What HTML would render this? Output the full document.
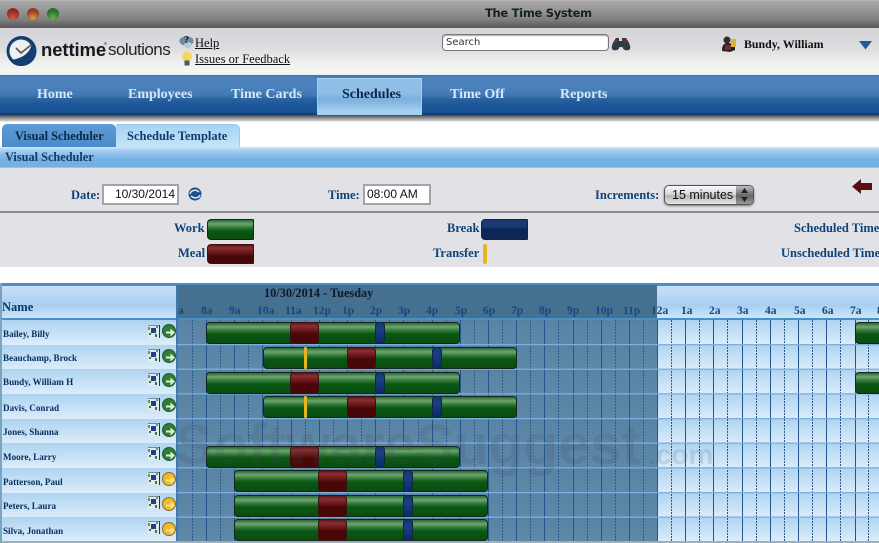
<!DOCTYPE html>
<html><head><meta charset="utf-8"><title>The Time System</title>
<style>
*{box-sizing:border-box}
html,body{margin:0;padding:0}
body{width:879px;height:543px;position:relative;overflow:hidden;background:#fff;font-family:"Liberation Serif",serif}
div,span,a,svg{position:absolute;white-space:nowrap}
.nav{top:86px;font:bold 14px/18px "Liberation Serif",serif;color:#d4e8f8}
.lab{font:bold 12.5px/16px "Liberation Serif",serif;color:#0f4377}
.input{background:#fff;border:2px solid #a4a4a6;font:12px/17px "Liberation Sans",sans-serif;color:#111}
.row{left:0;width:879px;height:25px;background:linear-gradient(#aed3f0,#dcedfb)}
.name{left:3px;font:bold 9.100px/12px "Liberation Serif",serif;color:#082f60}
.hr{top:304px;font:bold 11.5px/14px "Liberation Serif",serif;color:#14487f}
.w,.m,.b{height:22px;border:1px solid #13261c;border-radius:4px}
.w{background:linear-gradient(#2a6a32 0,#6fa573 4px,#3a8042 7px,#0a5713 11px,#0a4d10 100%)}
.m{background:linear-gradient(#5d1518 0,#8b2e30 3px,#6e1c1f 7px,#4a0707 11px,#470707 100%);border-color:#3a1010}
.b{background:linear-gradient(#17386f,#1a3f86 6px,#0c2a66);border-color:#10283f}
.t{height:22px;width:3px;background:#e3b71e;border-radius:1px}
.ic{left:148px;width:12px;height:13px}
.go{left:162px;width:14px;height:14px;border-radius:50%;background:#2f7d36;border:1px solid #1f5a28}
.go.y{background:#ecb92f;border-color:#8e6b23}
.go svg{left:1.500px;top:1.500px}
</style></head><body>

<svg width="0" height="0" style="left:0;top:0"><defs>
<g id="mp"><rect width="12" height="13" fill="#dfe9ee"/><rect x="11" width="1" height="13" fill="#28343e"/><rect width="11" height="1" fill="#7b8b97"/><rect x="0" y="2" width="2" height="3" fill="#5a9a60"/><rect x="3" y="3" width="5" height="5" fill="#1c3f8c"/><rect x="1" y="8" width="2" height="2" fill="#2f7d3c"/><rect x="7" y="9" width="2" height="3" fill="#2f7d3c"/><rect x="8" y="1" width="2" height="2" fill="#6c8a98"/></g>
<path id="ar" d="M1 4.500 H5.500 V1.500 L10 5.500 L5.500 9.500 V6.500 H1Z"/>
</defs></svg>

<!-- title bar -->
<div style="left:0;top:0;width:879px;height:28px;background:linear-gradient(#c9c9c9 0,#a8a8a8 1px,#969696 10px,#7e7e7e 20px,#5b5b5b 27px)"></div>
<div style="left:7px;top:8px;width:12px;height:12px;border-radius:50%;background:radial-gradient(circle at 50% 85%,#c9603c,#8e2a22 65%)"></div>
<div style="left:27px;top:8px;width:12px;height:12px;border-radius:50%;background:radial-gradient(circle at 50% 85%,#d8a23e,#9b3528 65%)"></div>
<div style="left:47px;top:8px;width:12px;height:12px;border-radius:50%;background:radial-gradient(circle at 50% 85%,#6cb14a,#2a6e2c 65%)"></div>
<div style="left:485px;top:6px;font:bold 11.500px/15px 'DejaVu Sans',sans-serif;color:#152225;letter-spacing:-.3px">The Time System</div>

<!-- header -->
<div style="left:0;top:28px;width:879px;height:47px;background:linear-gradient(#d4d4d8 0,#dddde0 20px,#f0f0ee 35px,#f6f6f3 44px,#e2f2f6 47px)"></div>
<svg style="left:6px;top:35px" width="31" height="32" viewBox="0 0 31 32">
<circle cx="15.500" cy="16" r="15" fill="#143f73"/>
<circle cx="15" cy="16" r="11.500" fill="#eef0f2"/>
<path d="M4 25 C14 24 23 20 26 9 L30 16 C30 24 22 31 15 31 C10 31 6 29 4 25Z" fill="#143f73"/>
<path d="M10 13 L15 18 L25 10" stroke="#555" stroke-width="1.600" fill="none"/>
</svg>
<div style="left:41px;top:38px;font:bold 18.500px/24px 'Liberation Sans',sans-serif;color:#16191d;letter-spacing:-.1px">nettime</div>
<div style="left:104px;top:41px;font:bold 4px/5px 'Liberation Sans',sans-serif;color:#333">®</div>
<div style="left:108px;top:38px;font:17px/24px 'Liberation Sans',sans-serif;color:#22262b;letter-spacing:-.55px">solutions</div>

<svg style="left:179px;top:36px" width="15" height="12" viewBox="0 0 15 12"><ellipse cx="7.500" cy="5" rx="7" ry="4.800" fill="#6f8ca3"/><ellipse cx="9" cy="9" rx="4" ry="3" fill="#b6cad8"/></svg>
<div style="left:184px;top:35px;font:bold 10px/12px 'Liberation Serif',serif;color:#111">?</div>
<div style="left:195px;top:36px;font:12.500px/15px 'Liberation Serif',serif;color:#111;text-decoration:underline">Help</div>
<svg style="left:181px;top:51px" width="12" height="16" viewBox="0 0 12 16"><circle cx="6" cy="5.500" r="5" fill="#f0d860"/><rect x="3.500" y="9.500" width="5" height="5" fill="#556"/></svg>
<div style="left:195px;top:52px;font:12.500px/15px 'Liberation Serif',serif;color:#111;text-decoration:underline">Issues or Feedback</div>

<div style="left:442px;top:34px;width:167px;height:17px;background:#fff;border:1px solid #77777c;border-radius:4px;box-shadow:inset 0 1px 1px #aaa;font:10px/16px 'DejaVu Sans',sans-serif;color:#333;padding-left:3px">Search</div>
<svg style="left:611px;top:36px" width="20" height="15" viewBox="0 0 20 15"><path d="M2 14 C-1 12 2 6 5 2 H8 V5 H11 V2 H15 C18 6 21 12 18 14 C15 15 12 14 11.500 11 H8.500 C8 14 5 15 2 14Z" fill="#2e3a44"/><circle cx="5" cy="5" r="1.500" fill="#8a2a2a"/><circle cx="14" cy="5" r="1.500" fill="#8a2a2a"/></svg>
<svg style="left:721px;top:36px" width="17" height="17" viewBox="0 0 17 17"><circle cx="6" cy="4" r="3.500" fill="#2d2d2d"/><path d="M1 15 C1 8 4 7 7 7 L14 8 L14 14 L9 16 Z" fill="#26221f"/><rect x="10" y="3" width="5" height="8" fill="#d9b33a"/><rect x="4" y="9" width="6" height="5" fill="#7d2a24"/></svg>
<div style="left:744px;top:37px;font:bold 11.900px/15px 'Liberation Serif',serif;color:#111">Bundy, William</div>
<svg style="left:859px;top:41px" width="13" height="9"><path d="M0 0 H13 L6.500 8.500Z" fill="#235a9c"/></svg>

<!-- nav -->
<div style="left:0;top:75px;width:879px;height:40px;background:linear-gradient(#3f74ae 0,#4d82bc 3px,#4a7fba 13px,#4279b4 20px,#2a639f 24px,#1c5699 30px,#1b5496 37px,#123c6e 39px)"></div>
<div style="left:0;top:115px;width:879px;height:7px;background:linear-gradient(#4a4a4e,#8f8f92 3px,#d5d5d7 6px,#fff)"></div>
<div style="left:317px;top:78px;width:105px;height:37px;background:linear-gradient(#90bfe8 0,#8ebde6 14px,#7db0dc 20px,#86b8e2 24px,#a5d0f2 32px,#a3cef0);border:1px solid #a6cdec;border-bottom:0"></div>
<div class="nav" style="left:37px">Home</div>
<div class="nav" style="left:128px">Employees</div>
<div class="nav" style="left:231px">Time Cards</div>
<div class="nav" style="left:342px;color:#0a2c4c">Schedules</div>
<div class="nav" style="left:450px">Time Off</div>
<div class="nav" style="left:560px">Reports</div>

<!-- tabs -->
<div style="left:2px;top:124px;width:114px;height:23px;background:linear-gradient(#5d9ad8,#4a8cc8);border-radius:5px 5px 0 0"></div>
<div style="left:116px;top:124px;width:124px;height:23px;background:linear-gradient(#a6d3f4,#c5e4fa);border-radius:0 5px 0 0;border:1px solid #9fcbe9;border-bottom:0;border-left:0"></div>
<div style="left:15px;top:129px;font:bold 12.300px/15px 'Liberation Serif',serif;color:#0c2a47">Visual Scheduler</div>
<div style="left:127px;top:129px;font:bold 12.500px/15px 'Liberation Serif',serif;color:#0f3d6b">Schedule Template</div>

<!-- section title -->
<div style="left:0;top:147px;width:879px;height:21px;background:linear-gradient(#cfe8f8 0,#a9d0f2 3px,#8abcea 8px,#74b0e4 13px,#74b0e4 20px,#b9d8ef 21px)"></div>
<div style="left:5px;top:150px;font:bold 12.300px/15px 'Liberation Serif',serif;color:#0e3d6a">Visual Scheduler</div>

<!-- controls -->
<div style="left:0;top:168px;width:879px;height:45px;background:#e2e2e6;border-bottom:2px solid #8d8d90"></div>
<div class="lab" style="left:71px;top:187px">Date:</div>
<div class="input" style="left:102px;top:184px;width:77px;height:21px;text-align:right;padding-right:2px">10/30/2014</div>
<svg style="left:187px;top:186px" width="16" height="16" viewBox="0 0 16 16"><circle cx="8" cy="8" r="6.500" fill="#1c4f88"/><path d="M3 8 C4 4 9 3 12 6 M13 9 C12 12 7 13 4 10" stroke="#dfeaf3" stroke-width="1.500" fill="none"/></svg>
<div class="lab" style="left:328px;top:187px">Time:</div>
<div class="input" style="left:363px;top:184px;width:68px;height:21px;text-align:left;padding-left:2px">08:00 AM</div>
<div class="lab" style="left:595px;top:187px">Increments:</div>
<div style="left:664px;top:185px;width:90px;height:20px;border-radius:5px;border:1px solid #555;background:linear-gradient(#fafafa,#d8d8d8 45%,#b5b5b5 55%,#e8e8e8);box-shadow:0 1px 2px #777"></div>
<div style="left:736px;top:186px;width:17px;height:18px;border-radius:0 4px 4px 0;background:linear-gradient(#bdbdbd,#666 55%,#999)"></div>
<svg style="left:740px;top:188px" width="9" height="14"><path d="M4.500 0 L8 5 H1Z M4.500 14 L8 9 H1Z" fill="#222"/></svg>
<div style="left:672px;top:187px;font:12.500px/16px 'Liberation Sans',sans-serif;color:#111">15 minutes</div>
<svg style="left:852px;top:178px" width="21" height="17" viewBox="0 0 21 17"><path d="M0 8.500 L9 1 V5 H20 V12 H9 V16Z" fill="#5b0e10"/></svg>

<!-- legend -->
<div style="left:0;top:213px;width:879px;height:54px;background:#e2e2e6"></div>
<div class="lab" style="left:174px;top:220px">Work</div>
<div class="w" style="left:207px;top:219px;width:47px;height:21px;border-radius:4px 1px 1px 4px"></div>
<div class="lab" style="left:178px;top:245px">Meal</div>
<div class="m" style="left:207px;top:244px;width:47px;height:20px;border-radius:4px 1px 1px 4px"></div>
<div class="lab" style="left:447px;top:220px">Break</div>
<div class="b" style="left:481px;top:219px;width:47px;height:21px;border-radius:4px 1px 1px 4px;background:linear-gradient(#1a3a72,#1a3a72 7px,#0e2557 9px)"></div>
<div class="lab" style="left:433px;top:245px">Transfer</div>
<div class="t" style="left:483px;top:244px;width:4px;height:20px;border-radius:2px"></div>
<div class="lab" style="left:794px;top:220px">Scheduled Time</div>
<div class="lab" style="left:781px;top:245px">Unscheduled Time</div>

<!-- grid frame -->
<div style="left:0;top:283px;width:879px;height:260px;background:#aed3f0"></div>
<div style="left:0;top:283px;width:879px;height:3px;background:#4a8fc8"></div>
<div style="left:0;top:286px;width:879px;height:32px;background:linear-gradient(#c8e1f7,#a8cff0 60%,#cfe6fa)"></div>
<div style="left:177px;top:285px;width:480px;height:33px;background:#45708f"></div>
<div style="left:0;top:318px;width:879px;height:2px;background:#4a8fc8"></div>
<div style="left:2px;top:300px;font:bold 12.500px/15px 'Liberation Serif',serif;color:#0c3563">Name</div>
<div style="left:264px;top:287px;font:bold 12.300px/13px 'Liberation Serif',serif;color:#101a28">10/30/2014 - Tuesday</div>

<div class="hr" style="left:178px">a</div>
<div class="hr" style="left:201px">8a</div>
<div class="hr" style="left:229px">9a</div>
<div class="hr" style="left:257px">10a</div>
<div class="hr" style="left:285px">11a</div>
<div class="hr" style="left:313px">12p</div>
<div class="hr" style="left:342px">1p</div>
<div class="hr" style="left:370px">2p</div>
<div class="hr" style="left:398px">3p</div>
<div class="hr" style="left:426px">4p</div>
<div class="hr" style="left:455px">5p</div>
<div class="hr" style="left:483px">6p</div>
<div class="hr" style="left:511px">7p</div>
<div class="hr" style="left:539px">8p</div>
<div class="hr" style="left:567px">9p</div>
<div class="hr" style="left:595px">10p</div>
<div class="hr" style="left:623px">11p</div>
<div class="hr" style="left:651px">12a</div>
<div class="hr" style="left:681px">1a</div>
<div class="hr" style="left:709px">2a</div>
<div class="hr" style="left:737px">3a</div>
<div class="hr" style="left:765px">4a</div>
<div class="hr" style="left:794px">5a</div>
<div class="hr" style="left:822px">6a</div>
<div class="hr" style="left:850px">7a</div>
<div class="hr" style="left:877px">8</div>

<!-- row backgrounds -->
<div class="row" style="top:320px"></div>
<div class="row" style="top:345px"></div>
<div class="row" style="top:369px"></div>
<div class="row" style="top:394px"></div>
<div class="row" style="top:419px"></div>
<div class="row" style="top:443px"></div>
<div class="row" style="top:468px"></div>
<div class="row" style="top:493px"></div>
<div class="row" style="top:517px;height:24px"></div>
<div style="left:0;top:541px;width:879px;height:2px;background:#9ab0bf"></div>
<div style="left:0;top:283px;width:2px;height:260px;background:#7aa4c4"></div>

<!-- dark past-hours overlay -->
<div style="left:177px;top:320px;width:480px;height:221px;background:rgba(58,105,140,.76)"></div>
<div style="left:176px;top:285px;width:2px;height:256px;background:#3d77b4"></div>

<!-- grid lines -->
<svg style="left:0;top:320px" width="879" height="221">
<path fill="none" stroke="#24558f" stroke-width="1" d="M206.500 0V221M234.500 0V221M262.500 0V221M291.500 0V221M319.500 0V221M347.500 0V221M375.500 0V221M403.500 0V221M432.500 0V221M460.500 0V221M488.500 0V221M516.500 0V221M544.500 0V221M573.500 0V221M601.500 0V221M629.500 0V221M657.500 0V221M685.500 0V221M713.500 0V221M742.500 0V221M770.500 0V221M798.500 0V221M826.500 0V221M855.500 0V221"/>
<path fill="none" stroke="#2e5a8e" stroke-width="1" stroke-dasharray="2 1" d="M192.500 0V221M220.500 0V221M248.500 0V221M277.500 0V221M305.500 0V221M333.500 0V221M361.500 0V221M389.500 0V221M418.500 0V221M446.500 0V221M474.500 0V221M502.500 0V221M530.500 0V221M558.500 0V221M587.500 0V221M615.500 0V221M643.500 0V221M671.500 0V221M699.500 0V221M727.500 0V221M756.500 0V221M784.500 0V221M812.500 0V221M840.500 0V221M868.500 0V221"/>
<g fill="#7eaede"><rect x="177" y="24" width="702" height="1.300"/><rect x="177" y="48.600" width="702" height="1.300"/><rect x="177" y="73.200" width="702" height="1.300"/><rect x="177" y="98" width="702" height="1.300"/><rect x="177" y="122.500" width="702" height="1.300"/><rect x="177" y="147.200" width="702" height="1.300"/><rect x="177" y="172" width="702" height="1.300"/><rect x="177" y="196.500" width="702" height="1.300"/></g>
</svg>

<!-- names -->
<div class="name" style="top:328px">Bailey, Billy</div>
<div class="name" style="top:352px">Beauchamp, Brock</div>
<div class="name" style="top:376px">Bundy, William H</div>
<div class="name" style="top:402px">Davis, Conrad</div>
<div class="name" style="top:426px">Jones, Shanna</div>
<div class="name" style="top:451px">Moore, Larry</div>
<div class="name" style="top:476px">Patterson, Paul</div>
<div class="name" style="top:500px">Peters, Laura</div>
<div class="name" style="top:525px">Silva, Jonathan</div>

<!-- row icons -->
<svg class="ic" style="top:325px"><use href="#mp"/></svg><div class="go" style="top:324px"><svg width="11" height="11"><use href="#ar" fill="#dfeee0"/></svg></div>
<svg class="ic" style="top:349px"><use href="#mp"/></svg><div class="go" style="top:349px"><svg width="11" height="11"><use href="#ar" fill="#dfeee0"/></svg></div>
<svg class="ic" style="top:373px"><use href="#mp"/></svg><div class="go" style="top:373px"><svg width="11" height="11"><use href="#ar" fill="#dfeee0"/></svg></div>
<svg class="ic" style="top:398px"><use href="#mp"/></svg><div class="go" style="top:398px"><svg width="11" height="11"><use href="#ar" fill="#dfeee0"/></svg></div>
<svg class="ic" style="top:423px"><use href="#mp"/></svg><div class="go" style="top:423px"><svg width="11" height="11"><use href="#ar" fill="#dfeee0"/></svg></div>
<svg class="ic" style="top:447px"><use href="#mp"/></svg><div class="go" style="top:447px"><svg width="11" height="11"><use href="#ar" fill="#dfeee0"/></svg></div>
<svg class="ic" style="top:472px"><use href="#mp"/></svg><div class="go y" style="top:472px"><svg width="11" height="11"><use href="#ar" fill="#f6e088"/></svg></div>
<svg class="ic" style="top:496px"><use href="#mp"/></svg><div class="go y" style="top:497px"><svg width="11" height="11"><use href="#ar" fill="#f6e088"/></svg></div>
<svg class="ic" style="top:521px"><use href="#mp"/></svg><div class="go y" style="top:522px"><svg width="11" height="11"><use href="#ar" fill="#f6e088"/></svg></div>

<!-- bars -->
<div class="w" style="left:206px;top:322px;width:254px"></div><div class="m" style="left:290px;top:322px;width:29px"></div><div class="b" style="left:375px;top:322px;width:10px"></div><div class="w" style="left:855px;top:322px;width:40px"></div>
<div class="w" style="left:263px;top:347px;width:254px"></div><div class="t" style="left:304px;top:347px"></div><div class="m" style="left:347px;top:347px;width:29px"></div><div class="b" style="left:432px;top:347px;width:10px"></div>
<div class="w" style="left:206px;top:372px;width:254px"></div><div class="m" style="left:290px;top:372px;width:29px"></div><div class="b" style="left:375px;top:372px;width:10px"></div><div class="w" style="left:855px;top:372px;width:40px"></div>
<div class="w" style="left:263px;top:396px;width:254px"></div><div class="t" style="left:304px;top:396px"></div><div class="m" style="left:347px;top:396px;width:29px"></div><div class="b" style="left:432px;top:396px;width:10px"></div>
<div class="w" style="left:206px;top:446px;width:254px"></div><div class="m" style="left:290px;top:446px;width:29px"></div><div class="b" style="left:375px;top:446px;width:10px"></div>
<div class="w" style="left:234px;top:470px;width:254px"></div><div class="m" style="left:318px;top:470px;width:29px"></div><div class="b" style="left:403px;top:470px;width:10px"></div>
<div class="w" style="left:234px;top:495px;width:254px"></div><div class="m" style="left:318px;top:495px;width:29px"></div><div class="b" style="left:403px;top:495px;width:10px"></div>
<div class="w" style="left:234px;top:519px;width:254px"></div><div class="m" style="left:318px;top:519px;width:29px"></div><div class="b" style="left:403px;top:519px;width:10px"></div>

<!-- watermark -->
<div style="left:175px;top:410px;font:bold 57px/70px 'Liberation Sans',sans-serif;color:rgba(60,72,84,.16)">SoftwareSuggest</div>
<div style="left:648px;top:437px;font:bold 28px/36px 'Liberation Sans',sans-serif;color:rgba(60,72,84,.14)">.com</div>

</body></html>
